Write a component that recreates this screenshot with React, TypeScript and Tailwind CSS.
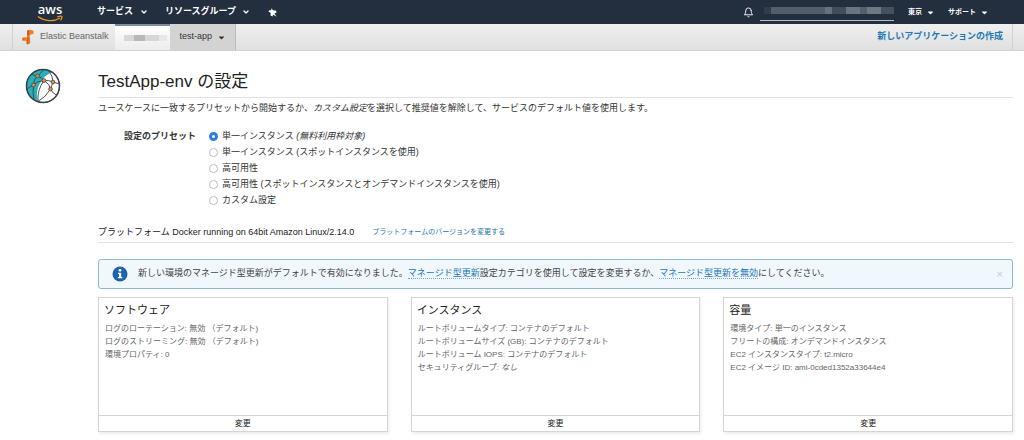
import { FaCaretDown } from "react-icons/fa";
import { FiBell, FiChevronDown } from "react-icons/fi";

const presets = [
  { id: "single-free", label: "単一インスタンス", note: "(無料利用枠対象)" },
  { id: "single-spot", label: "単一インスタンス (スポットインスタンスを使用)" },
  { id: "ha", label: "高可用性" },
  { id: "ha-spot", label: "高可用性 (スポットインスタンスとオンデマンドインスタンスを使用)" },
  { id: "custom", label: "カスタム設定" },
];

interface Item {
  name: string;
  value: string;
  empty?: boolean;
}

const cards: { title: string; items: Item[] }[] = [
  {
    title: "ソフトウェア",
    items: [
      { name: "ログのローテーション", value: "無効 （デフォルト)" },
      { name: "ログのストリーミング", value: "無効 （デフォルト)" },
      { name: "環境プロパティ", value: "0" },
    ],
  },
  {
    title: "インスタンス",
    items: [
      { name: "ルートボリュームタイプ", value: "コンテナのデフォルト" },
      { name: "ルートボリュームサイズ (GB)", value: "コンテナのデフォルト" },
      { name: "ルートボリューム IOPS", value: "コンテナのデフォルト" },
      { name: "セキュリティグループ", value: "なし", empty: true },
    ],
  },
  {
    title: "容量",
    items: [
      { name: "環境タイプ", value: "単一のインスタンス" },
      { name: "フリートの構成", value: "オンデマンドインスタンス" },
      { name: "EC2 インスタンスタイプ", value: "t2.micro" },
      { name: "EC2 イメージ ID", value: "ami-0cded1352a33644e4" },
    ],
  },
];

function AwsLogo() {
  return (
    <a href="#" aria-label="AWS" className="flex w-6 flex-col items-center text-white">
      <span className="font-['Open_Sans',sans-serif] text-[13px] leading-3 font-semibold">aws</span>
      <svg viewBox="0 0 26 7" className="h-[7px] w-[26px]" fill="none" stroke="#f0932b" strokeWidth="1.4">
        <path d="M1 1.5C7.5 6.6 17 6.8 23 3" />
        <path d="M20.3 1.8C23 1 25.2 1 25 1.9C24.9 3 24.3 4.5 23.5 5.4" strokeWidth="1.2" />
      </svg>
    </a>
  );
}

function PinIcon() {
  return (
    <svg viewBox="0 0 16 16" className="size-[9px]" fill="currentColor">
      <path d="M6.5 0.500L8.800 4.200L14.500 5L15 8.500L11.500 9.500L15 15.500L9 11.500L8 15L4.500 13.500L4.800 9L0.500 5.800L2.500 3.800L5.500 4Z" />
    </svg>
  );
}

function BeanstalkIcon() {
  return (
    <svg viewBox="0 0 12 16" className="h-4 w-3">
      <path d="M5 1.500L8 0.800V6L7.200 7.500L8 9V14L5.500 15.500L4.500 14.800V9L5.500 7.500L5 6Z" fill="#c95c1e" />
      <path d="M7 1.200L8 0.800L11.500 1.800V4.800L9 5.500L8 6L7.200 7.500L8.200 9V14L6.300 15.200V9L5.800 7.500L7 5.500Z" fill="#ea7d2c" />
      <path d="M0.500 8.800L4.500 8V12L0.500 11.500Z" fill="#ea7d2c" />
      <path d="M0.500 8.800L1.500 9V11.500L0.500 11.500Z" fill="#c95c1e" />
    </svg>
  );
}

function Globe() {
  return (
    <svg viewBox="0 0 36 36" className="h-9 w-9" fill="none" stroke="#3a3f47" strokeWidth="0.9">
      <circle cx="18" cy="18" r="16.5" fill="#fff" />
      <path d="M18 1.5A16.5 16.5 0 0 0 13 33.700C9.500 24 14 10 27 4Q22 1.500 18 1.500Z" fill="#27b0ba" stroke="none" />
      <path d="M8.500 17Q8.500 11 12.500 8Q16 5 19 1.500" />
      <path d="M2 21Q5 18.500 8.500 17Q12 13 19 12.500Q24 12 28 14L34.500 16" />
      <path d="M6.500 6Q9 8 12.500 8Q16.500 9 19 12.500Q25 16 25.500 21Q28 26 31.500 27" />
      <path d="M8.500 17Q7.500 25 9 31.500M19 12.500Q12 22 13 33.500M25.500 21Q21 29 13 33.500" />
      <path d="M23.500 2.500Q28 8 28 14L25.500 21" />
      <circle cx="18" cy="18" r="16.500" strokeWidth="1.500" />
      <g fill="#ea8b3c" strokeWidth="0.7">
        <circle cx="12.500" cy="8" r="1.900" />
        <circle cx="19" cy="12.500" r="1.900" />
        <circle cx="8.500" cy="17" r="1.900" />
        <circle cx="28" cy="14" r="1.900" />
        <circle cx="25.500" cy="21" r="1.900" />
      </g>
    </svg>
  );
}

function TopNav() {
  return (
    <nav className="flex h-6 items-center bg-[#232f3e] pr-[35px] pl-[38px] text-[9px] font-bold text-white">
      <AwsLogo />
      <button className="ml-[35px] flex items-center gap-[7px]">
        サービス
        <FiChevronDown className="size-2" strokeWidth={4} />
      </button>
      <button className="ml-[17px] flex items-center gap-[6px]">
        リソースグループ
        <FiChevronDown className="size-2" strokeWidth={4} />
      </button>
      <button aria-label="ピン" className="ml-[18px]">
        <PinIcon />
      </button>
      <div className="ml-auto flex items-center text-[7px]">
        <button aria-label="通知">
          <FiBell className="size-[11px]" />
        </button>
        <div className="ml-[6px] h-[17px] w-[134px] border-b border-[#b9bec5] pt-[3px]">
          <div className="ml-1 flex h-[7px]">
            <span className="w-[7px] bg-[#303c4c]" />
            <span className="flex-1 bg-[#535d6b]" />
            <span className="w-[7px] bg-[#68717d]" />
            <span className="w-[14px] bg-[#424d5b]" />
            <span className="w-[14px] bg-[#6b7480]" />
            <span className="w-[7px] bg-[#56606d]" />
            <span className="w-[14px] bg-[#6f7883]" />
            <span className="w-[13px] bg-[#465160]" />
          </div>
        </div>
        <button className="ml-[14px] flex items-center gap-1">
          東京
          <FaCaretDown className="size-[9px]" />
        </button>
        <button className="ml-[13px] flex items-center gap-1">
          サポート
          <FaCaretDown className="size-[9px]" />
        </button>
      </div>
    </nav>
  );
}

function ServiceBar() {
  return (
    <div className="h-[27px] border-b border-[#d0d0d0] bg-linear-to-b from-[#efefef] to-[#e0e0e0] pr-[11px] pl-3 text-[9px]">
      <div className="flex h-full items-stretch border-x border-[#d0d0d0]">
        <a href="#" className="flex items-center gap-[6px] pr-[6px] pl-[9px] text-[#666]">
          <BeanstalkIcon />
          Elastic Beanstalk
        </a>
        <div className="flex w-[55px] items-center border-t-2 border-[#7f8b9c] bg-linear-to-b from-white to-[#ececec] pl-[9px]">
          <div className="flex h-[6px] flex-1">
            <span className="w-[10px] bg-[#d8d8d8]" />
            <span className="w-[11px] bg-[#b8b8b8]" />
            <span className="w-[14px] bg-[#d6d6d6]" />
            <span className="w-2 bg-[#e8e8e8]" />
          </div>
        </div>
        <button className="flex items-center gap-[5px] border-r border-[#bbb] bg-[#d3d3d3] pr-[9px] pl-[10px] text-[#333]">
          test-app
          <FaCaretDown className="size-[9px]" />
        </button>
        <a href="#" className="ml-auto flex items-center pr-[9px] font-bold text-[#1f78b4]">
          新しいアプリケーションの作成
        </a>
      </div>
    </div>
  );
}

function PresetPicker() {
  return (
    <fieldset className="mt-[14px] flex text-[9px] leading-4">
      <legend className="float-left w-[99px] pr-px text-right font-bold">設定のプリセット</legend>
      <div className="ml-3">
        {presets.map((p, i) => (
          <div key={p.id} className="flex h-4 items-center gap-1">
            <input
              type="radio"
              id={p.id}
              name="preset"
              defaultChecked={i === 0}
              className="size-[9px] appearance-none rounded-full border border-[#bbb] bg-white checked:border-[3px] checked:border-[#2f7de1]"
            />
            <label htmlFor={p.id}>
              {p.label}
              {p.note && <em> {p.note}</em>}
            </label>
          </div>
        ))}
      </div>
    </fieldset>
  );
}

function InfoBanner() {
  return (
    <div className="mt-4 flex h-[30px] items-center rounded-[3px] border border-[#8fb9cf] bg-[#f0f7fd] pr-[9px] pl-[13px] text-[9px] text-[#444]">
      <svg viewBox="0 0 16 16" className="mr-[10px] size-4 shrink-0">
        <circle cx="8" cy="8" r="7.5" fill="#1d64ae" />
        <circle cx="8" cy="4.3" r="1.4" fill="#fff" />
        <path d="M6 6.7H9.2V11H10.3V12.3H5.9V11H7V8H6Z" fill="#fff" />
      </svg>
      <p>
        新しい環境のマネージド型更新がデフォルトで有効になりました。
        <a href="#" className="border-b border-dotted border-[#7aa7cc] text-[#2277bb]">
          マネージド型更新
        </a>
        設定カテゴリを使用して設定を変更するか、
        <a href="#" className="border-b border-dotted border-[#7aa7cc] text-[#2277bb]">
          マネージド型更新を無効
        </a>
        にしてください。
      </p>
      <button aria-label="閉じる" className="ml-auto text-[11px] text-[#c3ccd6]">
        ×
      </button>
    </div>
  );
}

function ConfigCard({ title, items }: { title: string; items: Item[] }) {
  return (
    <section className="flex h-[135px] flex-col border border-[#d5d5d5] bg-white shadow-[1px_2px_3px_rgba(0,0,0,0.08)]">
      <div className="flex-1 px-[5px] pt-1">
        <h2 className="text-[11px] leading-4 text-[#222]">{title}</h2>
        <ul className="mt-1 px-px text-[8px] leading-[13px] text-[#666]">
          {items.map((item) => (
            <li key={item.name}>
              {item.name}: {item.empty ? <em>{item.value}</em> : item.value}
            </li>
          ))}
        </ul>
      </div>
      <button className="h-4 border-t border-[#d5d5d5] text-[8px] leading-[14px] text-[#222]">変更</button>
    </section>
  );
}

export default function App() {
  return (
    <div className="bg-white font-['Liberation_Sans','Noto_Sans_CJK_JP',sans-serif] text-[#333]">
      <TopNav />
      <ServiceBar />
      <main className="flex pr-[11px] pb-2 pl-[25px]">
        <div className="w-[73px] shrink-0 pt-[17px]">
          <Globe />
        </div>
        <div className="min-w-0 flex-1">
          <h1 className="mt-5 border-b border-[#e2e2e2] pb-1 text-[17px] leading-[22px] text-[#222]">
            TestApp-env の設定
          </h1>
          <p className="mt-1 text-[9px] leading-3">
            ユースケースに一致するプリセットから開始するか、<em>カスタム設定</em>
            を選択して推奨値を解除して、サービスのデフォルト値を使用します。
          </p>
          <PresetPicker />
          <div className="mt-[18px] flex items-center gap-[18px] border-b border-[#e2e2e2] pb-1 text-[9px] leading-3 text-[#222]">
            <span>プラットフォーム Docker running on 64bit Amazon Linux/2.14.0</span>
            <a href="#" className="text-[7px] text-[#2277aa]">
              プラットフォームのバージョンを変更する
            </a>
          </div>
          <InfoBanner />
          <div className="mt-2 grid grid-cols-3 gap-[23px]">
            {cards.map((card) => (
              <ConfigCard key={card.title} {...card} />
            ))}
          </div>
        </div>
      </main>
    </div>
  );
}
